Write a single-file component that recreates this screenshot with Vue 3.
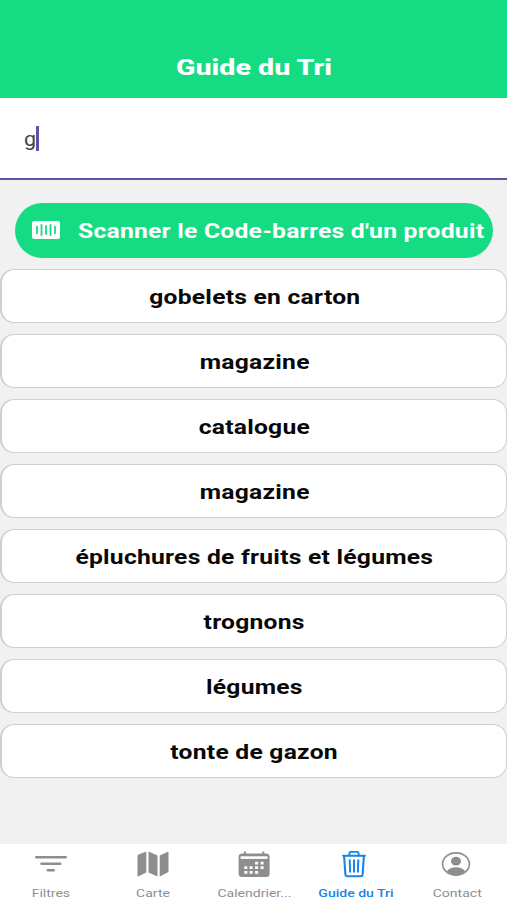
<script setup>
import { ref } from 'vue'

const search = ref('g')

const items = [
  'gobelets en carton',
  'magazine',
  'catalogue',
  'magazine',
  'épluchures de fruits et légumes',
  'trognons',
  'légumes',
  'tonte de gazon'
]

const tabs = [
  { id: 'filters', label: 'Filtres' },
  { id: 'map', label: 'Carte' },
  { id: 'calendar', label: 'Calendrier...' },
  { id: 'guide', label: 'Guide du Tri' },
  { id: 'contact', label: 'Contact' }
]
const active = ref('guide')
</script>

<template>
  <div class="screen">
    <header class="header">
      <h1>Guide du Tri</h1>
    </header>

    <div class="search">
      <span class="search-text">{{ search }}</span>
      <span class="caret"></span>
    </div>

    <main class="content">
      <button class="scan-btn">
        <svg class="scan-icon" viewBox="0 0 28 18">
          <rect width="28" height="18" rx="2" fill="#fff" />
          <path d="M5 5.7v6.6M9.5 4v10M14 5v8M18.5 4v10M23 5.7v6.6" stroke="#15dc83" stroke-width="1.8" stroke-linecap="round" />
        </svg>
        <span class="scan-label">Scanner le Code-barres d'un produit</span>
      </button>

      <ul class="list">
        <li v-for="(item, i) in items" :key="i" class="item">
          <span class="item-label">{{ item }}</span>
        </li>
      </ul>
    </main>

    <nav class="tabs">
      <button
        v-for="tab in tabs"
        :key="tab.id"
        class="tab"
        :class="{ active: tab.id === active }"
        @click="active = tab.id"
      >
        <svg v-if="tab.id === 'filters'" class="tab-icon" viewBox="0 0 34 28">
          <path d="M2.2 6.3h29.5M7.5 12.7h18.7M13.7 19.2h6" stroke="currentColor" stroke-width="2.5" stroke-linecap="round" />
        </svg>
        <svg v-else-if="tab.id === 'map'" class="tab-icon" viewBox="-1 0 34 28">
          <path d="M1.5 5Q1.5 4 2.5 3.5L10.3.5v21L2.6 25.3Q1.5 25.7 1.5 24.3zM12.5.5l9 4v21l-9-4zM23.7 4.5l7.6-3.6Q32.5.5 32.5 1.7V20q0 1-1 1.5L23.7 25.5z" fill="currentColor" />
        </svg>
        <svg v-else-if="tab.id === 'calendar'" class="tab-icon" viewBox="-0.6 0 34 28">
          <path d="M8.3 .5v4M26.7 .5v4" stroke="currentColor" stroke-width="2" />
          <rect x="2" y="2.5" width="31" height="23.5" rx="3.5" fill="currentColor" />
          <path d="M4 5.3h27v2.6H4z" fill="#fff" />
          <path d="M18.5 12.2h3M24 12.2h3M7.7 16.7h3M13 16.7h3M18.5 16.7h3M24 16.7h3M7.7 21.3h3M13 21.3h3M18.5 21.3h3" stroke="#fff" stroke-width="2.8" />
        </svg>
        <svg v-else-if="tab.id === 'guide'" class="tab-icon" viewBox="0 0 34 28">
          <g fill="none" stroke="currentColor" stroke-linecap="round" stroke-linejoin="round">
            <path d="M6.1 5l1.3 18.4q.2 1.8 2 1.8h13.2q1.8 0 2-1.8L25.9 5M5.2 4.8h21.6" stroke-width="2.1" />
            <path d="M11.4 4.5V2.4Q11.4.9 12.9.9h6.2q1.5 0 1.5 1.5v2.1" stroke-width="1.9" />
            <path d="M11.7 9.3l.4 11.4M16 9.3v11.4M20.3 9.3l-.4 11.4" stroke-width="2" />
          </g>
        </svg>
        <svg v-else class="tab-icon" viewBox="0 0 34 28">
          <ellipse cx="17" cy="13" rx="13.4" ry="11.1" fill="none" stroke="currentColor" stroke-width="1.7" />
          <ellipse cx="17" cy="10.2" rx="5" ry="4.4" fill="currentColor" />
          <path d="M7.8 20.2Q11 16.3 17 16.3t9.2 3.9Q22.5 24 17 24T7.8 20.2z" fill="currentColor" />
        </svg>
        <span class="tab-label">{{ tab.label }}</span>
      </button>
    </nav>
  </div>
</template>

<style>
body {
  margin: 0;
}
</style>

<style scoped>
.screen {
  display: flex;
  flex-direction: column;
  height: 900px;
  overflow: hidden;
  background: #f1f1f1;
  font-family: Roboto, 'Liberation Sans', sans-serif;
}

button {
  border: none;
  padding: 0;
  background: none;
  font-family: inherit;
  cursor: pointer;
}

.header {
  display: flex;
  align-items: flex-end;
  justify-content: center;
  box-sizing: border-box;
  height: 98px;
  padding-bottom: 16px;
  background: #15dc83;
}

h1 {
  margin: 0;
  font-size: 22px;
  line-height: 28px;
  font-weight: 800;
  color: #fff;
  transform: scaleX(1.3);
}

.search {
  display: flex;
  align-items: center;
  box-sizing: border-box;
  height: 82px;
  padding-left: 23.5px;
  background: #fff;
  border-bottom: 2px solid #6650a4;
}

.search-text {
  padding-top: 3px;
  font-size: 19.5px;
  line-height: 24px;
  color: #444;
  transform: scaleX(1.1);
  transform-origin: left;
}

.caret {
  width: 2.5px;
  height: 25px;
  margin-left: 2px;
  background: #6650a4;
}

.content {
  flex: 1;
  padding-top: 23px;
}

.scan-btn {
  display: flex;
  align-items: center;
  width: 478px;
  height: 55px;
  margin: 0 14px 0 15px;
  padding-left: 17px;
  border-radius: 28px;
  background: #15dc83;
}

.scan-icon {
  flex: none;
  width: 28px;
  height: 18px;
  margin-bottom: 2px;
}

.scan-label {
  margin-left: 18px;
  padding-top: 1px;
  font-size: 20px;
  font-weight: 700;
  letter-spacing: 0.2px;
  white-space: nowrap;
  color: #fff;
  transform: scaleX(1.232);
  transform-origin: left;
}

.list {
  display: flex;
  flex-direction: column;
  gap: 11px;
  margin: 11px 0 0;
  padding: 0;
  list-style: none;
}

.item {
  display: flex;
  align-items: center;
  justify-content: center;
  box-sizing: border-box;
  height: 54px;
  border: 1px solid #cfcfcf;
  border-left-width: 2px;
  border-radius: 14px;
  background: #fff;
}

.item-label {
  padding: 2px 0 0 1px;
  font-size: 20px;
  font-weight: 700;
  letter-spacing: 0.2px;
  white-space: nowrap;
  color: #080808;
  transform: scaleX(1.232);
}

.tabs {
  display: grid;
  grid-template-columns: repeat(5, 1fr);
  height: 56px;
  background: #fff;
}

.tab {
  display: flex;
  flex-direction: column;
  align-items: center;
  padding-top: 7px;
  color: #8e8e8f;
}

.tab.active {
  color: #1783ec;
}

.tab-icon {
  width: 34px;
  height: 28px;
}

.tab-label {
  margin-top: 7px;
  padding-left: 1px;
  font-size: 11.5px;
  line-height: 15px;
  white-space: nowrap;
  transform: scaleX(1.22);
}

.tab.active .tab-label {
  font-weight: 500;
}
</style>
